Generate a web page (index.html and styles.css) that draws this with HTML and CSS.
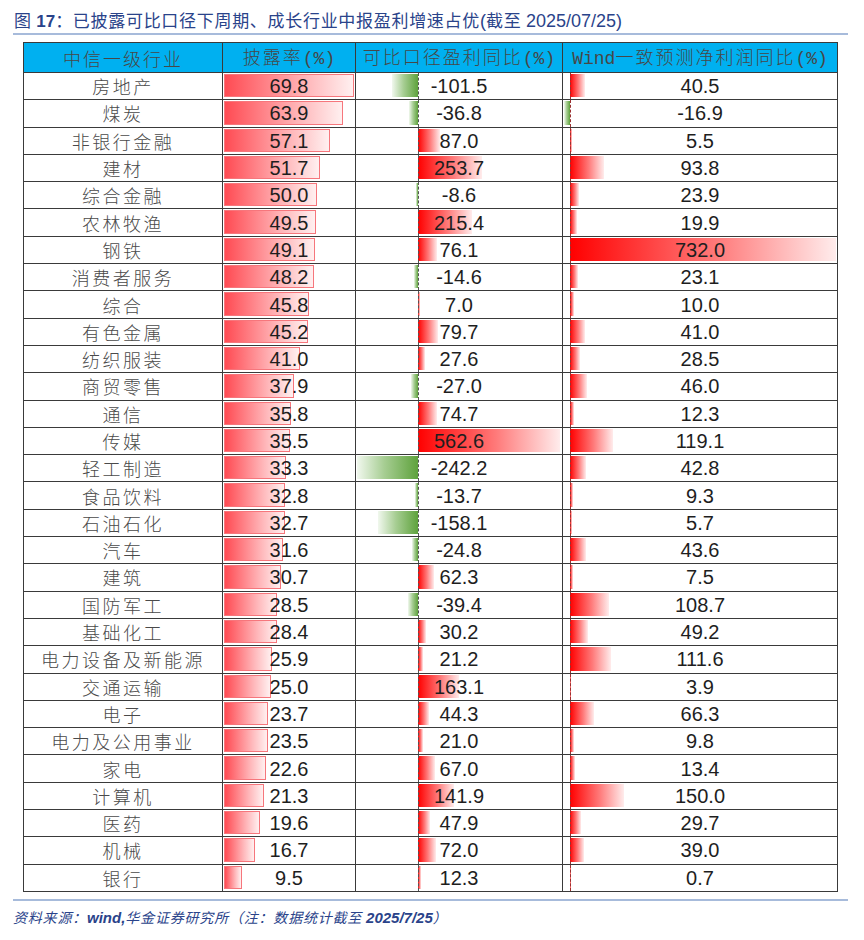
FILE: index.html
```html
<!DOCTYPE html>
<html lang="zh-CN">
<head>
<meta charset="utf-8">
<title>已披露可比口径下周期、成长行业中报盈利增速占优</title>
<link rel="stylesheet" href="styles.css">
</head>
<body>
<div class="page">
  <div class="title"><span class="fig">图 <b>17</b>：</span>已披露可比口径下周期、成长行业中报盈利增速占优<span class="lat">(</span>截至 <span class="lat">2025/07/25)</span></div>
  <div class="rule"></div>
  <table class="tbl">
    <colgroup><col class="c1"><col class="c2"><col class="c3"><col class="c4"></colgroup>
    <thead>
      <tr><th>中信一级行业</th><th>披露率<span class="m">(%)</span></th><th>可比口径盈利同比<span class="m">(%)</span></th><th><span class="m">Wind</span>一致预测净利润同比<span class="m">(%)</span></th></tr>
    </thead>
    <tbody>
      <tr><td class="name">房地产</td><td class="rate"><i class="rb" style="--v:69.8"></i><span>69.8</span></td><td class="g3"><i class="nb" style="--v:101.5"></i><span>-101.5</span></td><td class="g4"><i class="pb" style="--v:40.5"></i><span>40.5</span></td></tr>
      <tr><td class="name">煤炭</td><td class="rate"><i class="rb" style="--v:63.9"></i><span>63.9</span></td><td class="g3"><i class="nb" style="--v:36.8"></i><span>-36.8</span></td><td class="g4"><i class="nb" style="--v:16.9"></i><span>-16.9</span></td></tr>
      <tr><td class="name">非银行金融</td><td class="rate"><i class="rb" style="--v:57.1"></i><span>57.1</span></td><td class="g3"><i class="pb" style="--v:87.0"></i><span>87.0</span></td><td class="g4"><i class="pb" style="--v:5.5"></i><span>5.5</span></td></tr>
      <tr><td class="name">建材</td><td class="rate"><i class="rb" style="--v:51.7"></i><span>51.7</span></td><td class="g3"><i class="pb" style="--v:253.7"></i><span>253.7</span></td><td class="g4"><i class="pb" style="--v:93.8"></i><span>93.8</span></td></tr>
      <tr><td class="name">综合金融</td><td class="rate"><i class="rb" style="--v:50.0"></i><span>50.0</span></td><td class="g3"><i class="nb" style="--v:8.6"></i><span>-8.6</span></td><td class="g4"><i class="pb" style="--v:23.9"></i><span>23.9</span></td></tr>
      <tr><td class="name">农林牧渔</td><td class="rate"><i class="rb" style="--v:49.5"></i><span>49.5</span></td><td class="g3"><i class="pb" style="--v:215.4"></i><span>215.4</span></td><td class="g4"><i class="pb" style="--v:19.9"></i><span>19.9</span></td></tr>
      <tr><td class="name">钢铁</td><td class="rate"><i class="rb" style="--v:49.1"></i><span>49.1</span></td><td class="g3"><i class="pb" style="--v:76.1"></i><span>76.1</span></td><td class="g4"><i class="pb" style="--v:732.0"></i><span>732.0</span></td></tr>
      <tr><td class="name">消费者服务</td><td class="rate"><i class="rb" style="--v:48.2"></i><span>48.2</span></td><td class="g3"><i class="nb" style="--v:14.6"></i><span>-14.6</span></td><td class="g4"><i class="pb" style="--v:23.1"></i><span>23.1</span></td></tr>
      <tr><td class="name">综合</td><td class="rate"><i class="rb" style="--v:45.8"></i><span>45.8</span></td><td class="g3"><i class="pb" style="--v:7.0"></i><span>7.0</span></td><td class="g4"><i class="pb" style="--v:10.0"></i><span>10.0</span></td></tr>
      <tr><td class="name">有色金属</td><td class="rate"><i class="rb" style="--v:45.2"></i><span>45.2</span></td><td class="g3"><i class="pb" style="--v:79.7"></i><span>79.7</span></td><td class="g4"><i class="pb" style="--v:41.0"></i><span>41.0</span></td></tr>
      <tr><td class="name">纺织服装</td><td class="rate"><i class="rb" style="--v:41.0"></i><span>41.0</span></td><td class="g3"><i class="pb" style="--v:27.6"></i><span>27.6</span></td><td class="g4"><i class="pb" style="--v:28.5"></i><span>28.5</span></td></tr>
      <tr><td class="name">商贸零售</td><td class="rate"><i class="rb" style="--v:37.9"></i><span>37.9</span></td><td class="g3"><i class="nb" style="--v:27.0"></i><span>-27.0</span></td><td class="g4"><i class="pb" style="--v:46.0"></i><span>46.0</span></td></tr>
      <tr><td class="name">通信</td><td class="rate"><i class="rb" style="--v:35.8"></i><span>35.8</span></td><td class="g3"><i class="pb" style="--v:74.7"></i><span>74.7</span></td><td class="g4"><i class="pb" style="--v:12.3"></i><span>12.3</span></td></tr>
      <tr><td class="name">传媒</td><td class="rate"><i class="rb" style="--v:35.5"></i><span>35.5</span></td><td class="g3"><i class="pb" style="--v:562.6"></i><span>562.6</span></td><td class="g4"><i class="pb" style="--v:119.1"></i><span>119.1</span></td></tr>
      <tr><td class="name">轻工制造</td><td class="rate"><i class="rb" style="--v:33.3"></i><span>33.3</span></td><td class="g3"><i class="nb" style="--v:242.2"></i><span>-242.2</span></td><td class="g4"><i class="pb" style="--v:42.8"></i><span>42.8</span></td></tr>
      <tr><td class="name">食品饮料</td><td class="rate"><i class="rb" style="--v:32.8"></i><span>32.8</span></td><td class="g3"><i class="nb" style="--v:13.7"></i><span>-13.7</span></td><td class="g4"><i class="pb" style="--v:9.3"></i><span>9.3</span></td></tr>
      <tr><td class="name">石油石化</td><td class="rate"><i class="rb" style="--v:32.7"></i><span>32.7</span></td><td class="g3"><i class="nb" style="--v:158.1"></i><span>-158.1</span></td><td class="g4"><i class="pb" style="--v:5.7"></i><span>5.7</span></td></tr>
      <tr><td class="name">汽车</td><td class="rate"><i class="rb" style="--v:31.6"></i><span>31.6</span></td><td class="g3"><i class="nb" style="--v:24.8"></i><span>-24.8</span></td><td class="g4"><i class="pb" style="--v:43.6"></i><span>43.6</span></td></tr>
      <tr><td class="name">建筑</td><td class="rate"><i class="rb" style="--v:30.7"></i><span>30.7</span></td><td class="g3"><i class="pb" style="--v:62.3"></i><span>62.3</span></td><td class="g4"><i class="pb" style="--v:7.5"></i><span>7.5</span></td></tr>
      <tr><td class="name">国防军工</td><td class="rate"><i class="rb" style="--v:28.5"></i><span>28.5</span></td><td class="g3"><i class="nb" style="--v:39.4"></i><span>-39.4</span></td><td class="g4"><i class="pb" style="--v:108.7"></i><span>108.7</span></td></tr>
      <tr><td class="name">基础化工</td><td class="rate"><i class="rb" style="--v:28.4"></i><span>28.4</span></td><td class="g3"><i class="pb" style="--v:30.2"></i><span>30.2</span></td><td class="g4"><i class="pb" style="--v:49.2"></i><span>49.2</span></td></tr>
      <tr><td class="name">电力设备及新能源</td><td class="rate"><i class="rb" style="--v:25.9"></i><span>25.9</span></td><td class="g3"><i class="pb" style="--v:21.2"></i><span>21.2</span></td><td class="g4"><i class="pb" style="--v:111.6"></i><span>111.6</span></td></tr>
      <tr><td class="name">交通运输</td><td class="rate"><i class="rb" style="--v:25.0"></i><span>25.0</span></td><td class="g3"><i class="pb" style="--v:163.1"></i><span>163.1</span></td><td class="g4"><i class="pb" style="--v:3.9"></i><span>3.9</span></td></tr>
      <tr><td class="name">电子</td><td class="rate"><i class="rb" style="--v:23.7"></i><span>23.7</span></td><td class="g3"><i class="pb" style="--v:44.3"></i><span>44.3</span></td><td class="g4"><i class="pb" style="--v:66.3"></i><span>66.3</span></td></tr>
      <tr><td class="name">电力及公用事业</td><td class="rate"><i class="rb" style="--v:23.5"></i><span>23.5</span></td><td class="g3"><i class="pb" style="--v:21.0"></i><span>21.0</span></td><td class="g4"><i class="pb" style="--v:9.8"></i><span>9.8</span></td></tr>
      <tr><td class="name">家电</td><td class="rate"><i class="rb" style="--v:22.6"></i><span>22.6</span></td><td class="g3"><i class="pb" style="--v:67.0"></i><span>67.0</span></td><td class="g4"><i class="pb" style="--v:13.4"></i><span>13.4</span></td></tr>
      <tr><td class="name">计算机</td><td class="rate"><i class="rb" style="--v:21.3"></i><span>21.3</span></td><td class="g3"><i class="pb" style="--v:141.9"></i><span>141.9</span></td><td class="g4"><i class="pb" style="--v:150.0"></i><span>150.0</span></td></tr>
      <tr><td class="name">医药</td><td class="rate"><i class="rb" style="--v:19.6"></i><span>19.6</span></td><td class="g3"><i class="pb" style="--v:47.9"></i><span>47.9</span></td><td class="g4"><i class="pb" style="--v:29.7"></i><span>29.7</span></td></tr>
      <tr><td class="name">机械</td><td class="rate"><i class="rb" style="--v:16.7"></i><span>16.7</span></td><td class="g3"><i class="pb" style="--v:72.0"></i><span>72.0</span></td><td class="g4"><i class="pb" style="--v:39.0"></i><span>39.0</span></td></tr>
      <tr><td class="name">银行</td><td class="rate"><i class="rb" style="--v:9.5"></i><span>9.5</span></td><td class="g3"><i class="pb" style="--v:12.3"></i><span>12.3</span></td><td class="g4"><i class="pb" style="--v:0.7"></i><span>0.7</span></td></tr>
    </tbody>
  </table>
  <div class="rule bottom"></div>
  <div class="source">资料来源：<b>wind,</b>华金证券研究所（注：数据统计截至 <span class="lat">2025/7/25</span>）</div>
</div>
</body>
</html>
```
FILE: styles.css
```css
* { box-sizing: border-box; }
html, body { margin: 0; padding: 0; background: #fff; }
body { font-family: "Noto Sans CJK SC", "Liberation Sans", sans-serif; }

.page { width: 864px; height: 940px; }

.title {
  padding: 9px 0 0 14px;
  height: 33px;
  line-height: 22px;
  font-size: 17px;
  letter-spacing: 0.7px;
  color: #2a438a;
  white-space: nowrap;
}
.title .fig b { font-family: "Liberation Sans", sans-serif; font-weight: bold; letter-spacing: 0; }
.title .lat { font-family: "Liberation Sans", sans-serif; font-size: 18px; letter-spacing: 0; }

.rule {
  margin-left: 13px;
  width: 835px;
  height: 2px;
  background: #a7bbdb;
}

.tbl {
  margin: 7px 0 0 23px;
  border-collapse: collapse;
  table-layout: fixed;
  width: 814px;
}
.tbl col.c1 { width: 199px; }
.tbl col.c2 { width: 133px; }
.tbl col.c3 { width: 207px; }
.tbl col.c4 { width: 275px; }

.tbl th, .tbl td {
  border: 1px solid #3a3a3a;
  padding: 0;
  text-align: center;
  white-space: nowrap;
}
.tbl th {
  height: 28px;
  background: #00b0f0;
  color: #474747;
  font-weight: 300;
  font-size: 18px;
  letter-spacing: 2px;
  line-height: 26px;
}
.tbl th .m { font-family: "Liberation Mono", monospace; letter-spacing: 0; }

.tbl td {
  height: 27.3px;
  position: relative;
  font-family: "Liberation Sans", sans-serif;
  font-size: 20px;
  color: #1e1e1e;
  line-height: 26px;
}
.tbl td span { position: relative; z-index: 1; }
.tbl td.name {
  font-family: "Noto Sans CJK SC", sans-serif;
  font-weight: 300;
  font-size: 18px;
  letter-spacing: 2.5px;
  color: #4a4a4a;
}

.tbl i { position: absolute; display: block; }

/* disclosure rate bars */
.rb {
  left: 1px; top: 1px; bottom: 2px;
  width: calc(var(--v) * 1.86px);
  background: linear-gradient(to right, #ff4b53, #ffb9bc 65%, #fff0f0);
  border: 1px solid #f6767c;
}

/* axis-based bars */
.g3 { --axis: 62px; --k: 0.252px; }
.g4 { --axis: 7px; --k: 0.363px; }
.g3::before, .g4::before {
  content: "";
  position: absolute;
  left: var(--axis);
  top: 0; bottom: 0;
  border-left: 1px dashed #555;
  z-index: 1;
}
.g4::before { border-left-color: #9a3030; }
.pb {
  left: var(--axis); top: 1px; bottom: 2px;
  width: calc(var(--v) * var(--k));
  background: linear-gradient(to right, #ff0000, #ff7a7a 55%, #ffecec);
}
.nb {
  right: calc(100% - var(--axis)); top: 1px; bottom: 2px;
  width: calc(var(--v) * var(--k));
  background: linear-gradient(to left, #5ea23c, #a6cd92 55%, #f1f8ee);
}

.rule.bottom { margin-top: 7px; }

.source {
  margin: 6px 0 0 13px;
  font-size: 14px;
  line-height: 20px;
  font-style: italic;
  color: #2a438a;
  letter-spacing: 0.8px;
  white-space: nowrap;
}
.source b { font-family: "Liberation Sans", sans-serif; font-size: 15px; letter-spacing: 0; }
.source .lat { font-family: "Liberation Sans", sans-serif; font-size: 15px; font-weight: bold; letter-spacing: 0; }
```
